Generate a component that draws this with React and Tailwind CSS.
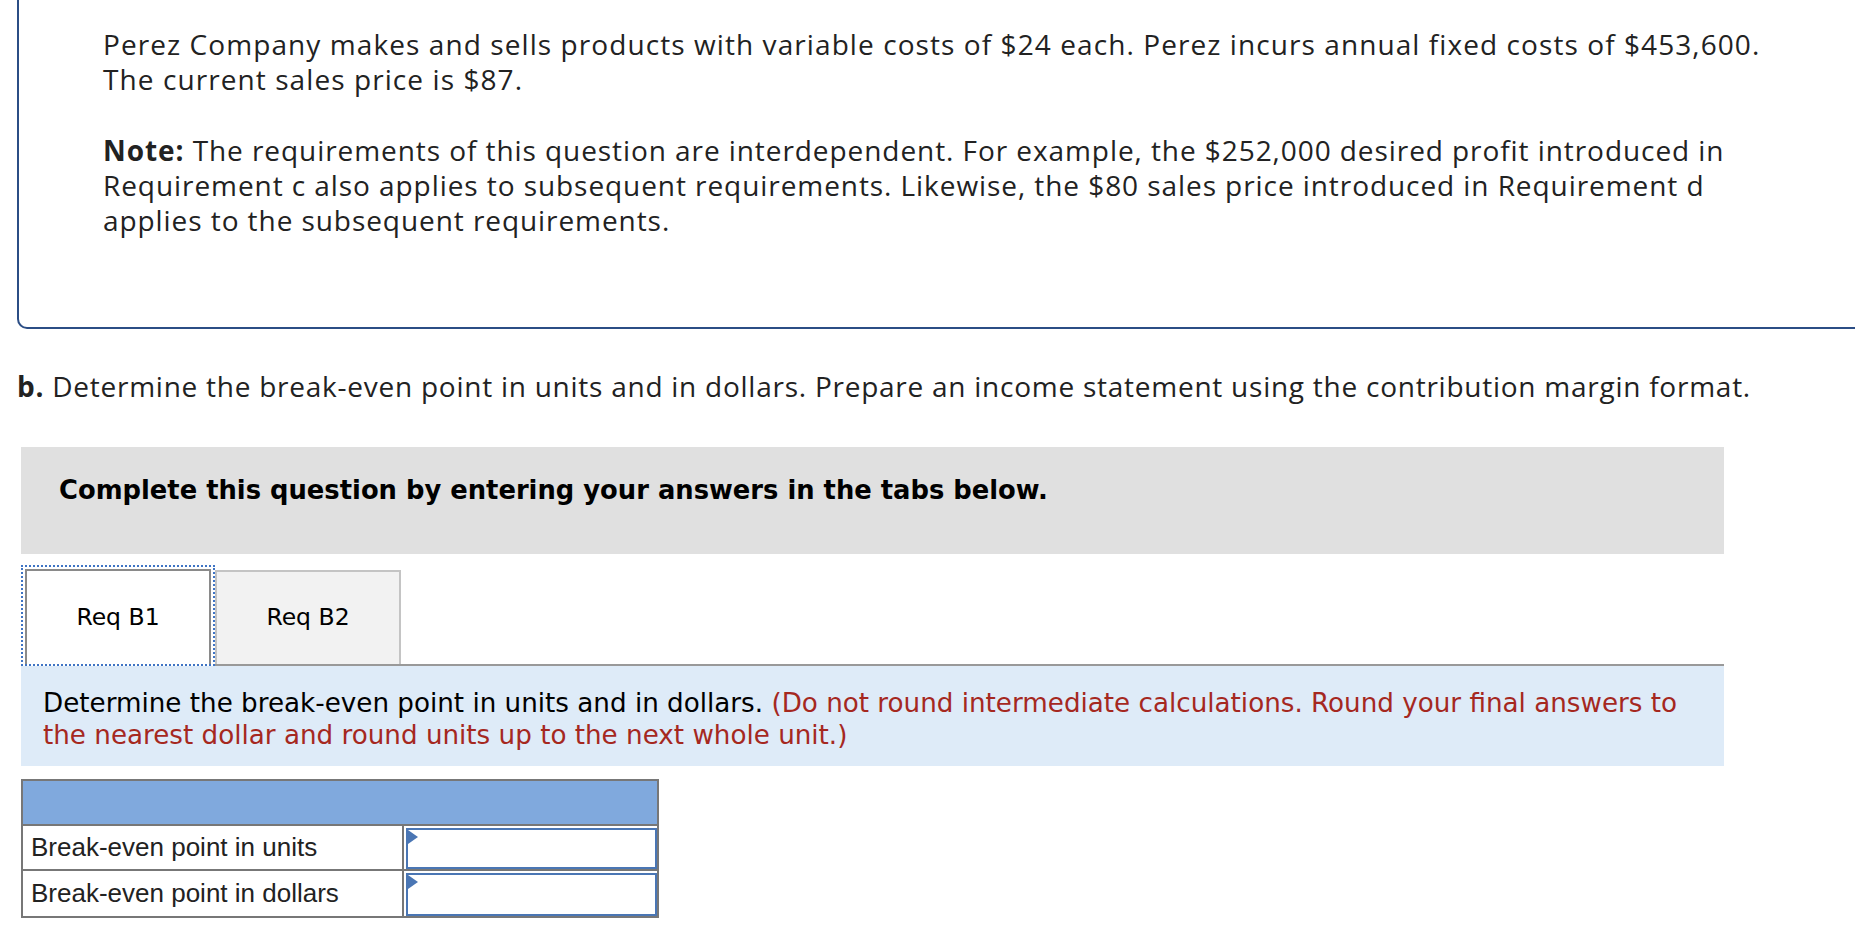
import React from "react";

const proxima = { fontFamily: '"Open Sans", "Noto Sans", sans-serif' };

function InputCell() {
  return (
    <div className="flex-1 pl-[2px] pt-[2px] h-full">
      <div className="relative h-full border-2 border-[#4a76b4] bg-white">
        <svg className="absolute left-0 top-0" width="10" height="14" viewBox="0 0 10 14">
          <polygon points="0,0 10,7 0,14" fill="#4a76b4" />
        </svg>
      </div>
    </div>
  );
}

export default function App() {
  return (
    <div className="w-[1855px] h-[935px] bg-white overflow-hidden text-[#222]">
      {/* Top info box */}
      <div
        className="ml-[17px] h-[329px] border-l-2 border-b-2 border-[#2b4d85] rounded-bl-[10px] pl-[84px] pt-[27px] text-[28px] leading-[35px]"
        style={proxima}
      >
        <p className="tracking-[1.08px]">
          <span className="block whitespace-nowrap">
            Perez Company makes and sells products with variable costs of $24 each. Perez incurs annual fixed costs of $453,600.
          </span>
          <span className="block whitespace-nowrap">The current sales price is $87.</span>
        </p>
        <p className="mt-[36px] tracking-[0.93px]">
          <span className="block whitespace-nowrap">
            <b>Note:</b> The requirements of this question are interdependent. For example, the $252,000 desired profit introduced in
          </span>
          <span className="block whitespace-nowrap">
            Requirement c also applies to subsequent requirements. Likewise, the $80 sales price introduced in Requirement d
          </span>
          <span className="block whitespace-nowrap">applies to the subsequent requirements.</span>
        </p>
      </div>

      {/* Requirement b */}
      <p
        className="ml-[17px] mt-[40px] text-[28px] leading-[35px] tracking-[0.75px] whitespace-nowrap"
        style={proxima}
      >
        <b>b.</b> Determine the break-even point in units and in dollars. Prepare an income statement using the contribution margin format.
      </p>

      <div className="ml-[21px] w-[1703px]" style={{ fontFamily: '"DejaVu Sans", Verdana, sans-serif' }}>
        {/* Grey instruction box */}
        <div className="mt-[43px] h-[107px] bg-[#e0e0e0] pl-[38px] pt-[28px]">
          <p className="text-[25.8px] leading-[30px] font-bold text-black whitespace-nowrap">
            Complete this question by entering your answers in the tabs below.
          </p>
        </div>

        {/* Tabs */}
        <div className="mt-[11px] flex items-end">
          <div className="border-2 border-dotted border-[#3f74c4] px-[2px] pt-[2px]">
            <div className="w-[186px] h-[95px] border-2 border-b-0 border-[#8a8a8a] bg-white flex items-center justify-center text-[23.5px] text-black">
              Req B1
            </div>
          </div>
          <div className="flex-1 flex items-end border-b-2 border-[#999]">
            <div className="w-[186px] h-[94px] border-2 border-b-0 border-[#c4c4c4] bg-[#f2f2f2] flex items-center justify-center text-[23.5px] text-black">
              Req B2
            </div>
          </div>
        </div>

        {/* Blue instruction box */}
        <div className="h-[100px] bg-[#deebf8] pl-[22px] pt-[21px] text-[26.2px] leading-[32px]">
          <p className="text-black">
            <span className="block whitespace-nowrap">
              Determine the break-even point in units and in dollars.{" "}
              <span className="text-[#a5281f]">
                (Do not round intermediate calculations. Round your final answers to
              </span>
            </span>
            <span className="block whitespace-nowrap text-[#a5281f]">
              the nearest dollar and round units up to the next whole unit.)
            </span>
          </p>
        </div>

        {/* Table */}
        <div
          className="mt-[13px] w-[638px] border-2 border-[#777]"
          style={{ fontFamily: '"Liberation Sans", Arial, sans-serif' }}
        >
          <div className="h-[45px] bg-[#80a9dd] border-b-2 border-[#777]" />
          <div className="flex h-[45px] border-b-2 border-[#777]">
            <div className="w-[381px] border-r-2 border-[#777] pl-[8px] flex items-center text-[26px] text-[#222]">
              Break-even point in units
            </div>
            <InputCell />
          </div>
          <div className="flex h-[45px]">
            <div className="w-[381px] border-r-2 border-[#777] pl-[8px] flex items-center text-[26px] text-[#222]">
              Break-even point in dollars
            </div>
            <InputCell />
          </div>
        </div>
      </div>
    </div>
  );
}
